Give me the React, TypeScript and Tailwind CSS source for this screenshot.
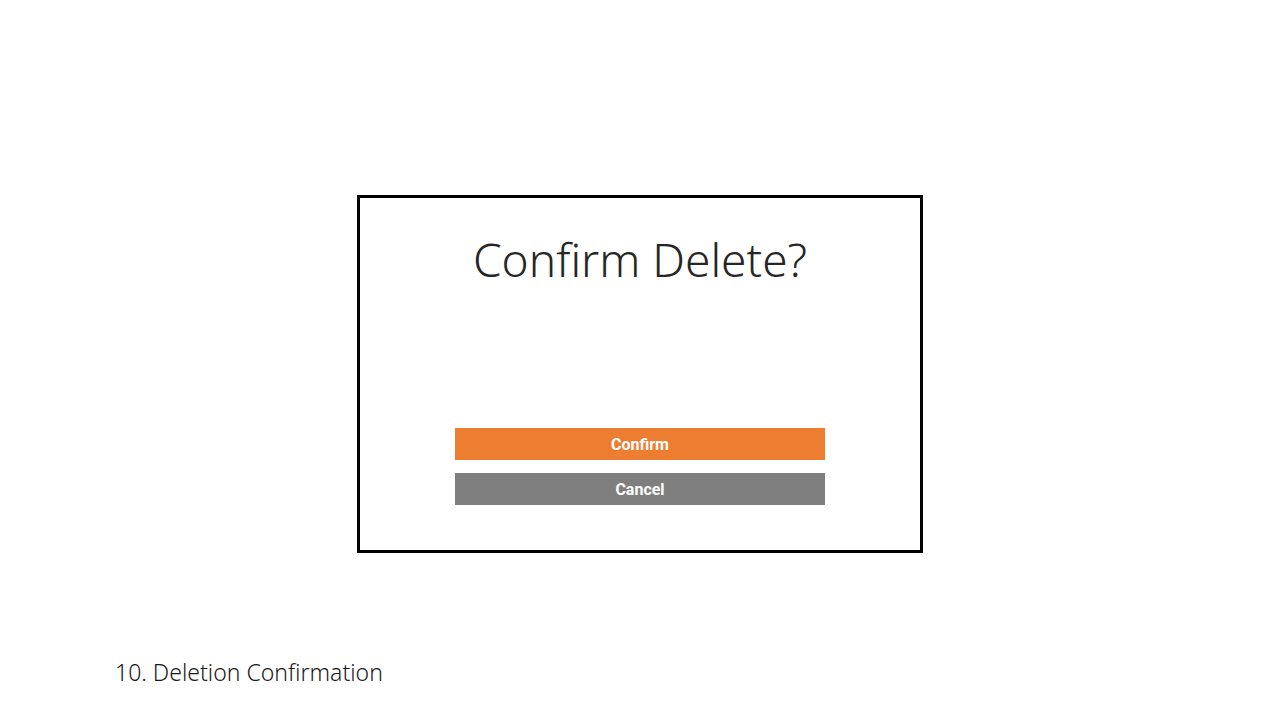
export default function App() {
    return (
        <div className="flex h-[720px] w-[1280px] flex-col bg-white">
            {/* dialog */}
            <div className="mx-auto mt-[195px] flex h-[358px] w-[566px] flex-col items-center border-[3px] border-black">
                <h1 className="mt-[33px] text-[46px] leading-[56px] font-light text-[#262626] [font-family:'Noto_Sans',sans-serif]">
                    Confirm Delete?
                </h1>
                <div className="mt-[141px] flex w-[370px] flex-col gap-[13px] [font-family:Roboto,sans-serif]">
                    <button className="h-[32px] w-full bg-[#ED7D31] pt-[1px] text-[16px] font-bold text-white">Confirm</button>
                    <button className="h-[32px] w-full bg-[#7F7F7F] pt-[2px] text-[16px] font-bold text-white">Cancel</button>
                </div>
            </div>
            <p className="mt-[104px] pl-[115px] text-[23px] leading-[30px] font-light text-[#1a1a1a] [font-family:'Noto_Sans',sans-serif]">
                10. Deletion Confirmation
            </p>
        </div>
    )
}
